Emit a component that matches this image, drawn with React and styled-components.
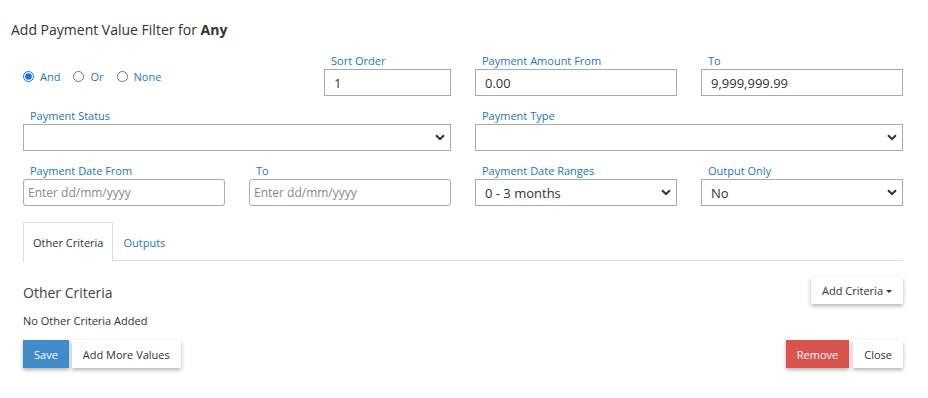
import React from "react";
import styled, { createGlobalStyle } from "styled-components";

const Global = createGlobalStyle`
  html, body { margin: 0; padding: 0; background: #fff; }
  body { font-family: "Open Sans", "Noto Sans", Arial, sans-serif; color: #333; }
  * { box-sizing: border-box; }
`;

const Page = styled.div`
  width: 928px;
  padding: 20px 0 24px 11px;
`;

const Title = styled.h1`
  margin: 0;
  font-size: 14px;
  font-weight: 400;
  line-height: 20px;
  color: #333;
  b { font-weight: 700; }
`;

const Form = styled.div`
  margin-left: 12px;
  width: 880px;
  padding-top: 14px;
`;

const Grid = styled.div`
  display: grid;
  grid-template-columns: repeat(4, 202px);
  column-gap: 24px;
  row-gap: 13px;
`;

const Field = styled.div`
  display: flex;
  flex-direction: column;
  grid-column: span ${(p) => p.$span || 1};
  align-self: end;
  ${(p) => (p.$width ? `width: ${p.$width}px; justify-self: end;` : "")}
`;

const Label = styled.label`
  font-size: 11px;
  line-height: 14px;
  color: #2277bb;
  padding-left: 7px;
  margin-bottom: 1px;
`;

const TextInput = styled.input`
  height: 27px;
  width: 100%;
  border: 1px solid #aaa;
  border-radius: ${(p) => (p.$rounded ? "3px" : "0")};
  padding: 0 ${(p) => (p.$rounded ? "4px" : "9px")};
  font-family: inherit;
  font-size: ${(p) => (p.$rounded ? "12px" : "13px")};
  color: #333;
  outline: none;
  &::placeholder { color: #8a8a8a; }
`;

const SelectWrap = styled.div`
  position: relative;
  height: 27px;
`;

const Select = styled.select`
  appearance: none;
  -webkit-appearance: none;
  width: 100%;
  height: 27px;
  border: 1px solid #aaa;
  border-radius: 0;
  background: #fff;
  padding: 0 24px 0 9px;
  font-family: inherit;
  font-size: 13px;
  color: #333;
  outline: none;
`;

const Chevron = styled.svg`
  position: absolute;
  right: 6px;
  top: 10px;
  width: 10px;
  height: 7px;
  pointer-events: none;
`;

const RadioGroup = styled.div`
  display: flex;
  align-items: center;
  height: 27px;
  gap: 13px;
  align-self: end;
  margin-bottom: 6px;
`;

const RadioLabel = styled.label`
  display: flex;
  align-items: center;
  gap: 6px;
  font-size: 11px;
  color: #2277bb;
  input {
    margin: 0;
    width: 11px;
    height: 11px;
    accent-color: #1a73e8;
  }
`;

const Row1Second = styled.div`
  display: flex;
  justify-content: flex-end;
  align-self: end;
`;

const Tabs = styled.div`
  display: flex;
  margin-top: 16px;
  border-bottom: 1px solid #ddd;
  height: 39px;
`;

const Tab = styled.div`
  display: flex;
  align-items: center;
  padding: 0 9px;
  font-size: 11px;
  color: ${(p) => (p.$active ? "#333" : "#2277bb")};
  border: 1px solid ${(p) => (p.$active ? "#ddd" : "transparent")};
  border-bottom: none;
  background: ${(p) => (p.$active ? "#fff" : "transparent")};
  margin-bottom: ${(p) => (p.$active ? "-1px" : "0")};
  height: ${(p) => (p.$active ? "40px" : "39px")};
`;

const SectionHead = styled.div`
  display: flex;
  justify-content: space-between;
  align-items: center;
  margin-top: 16px;
`;

const SectionTitle = styled.h2`
  margin: 0;
  font-size: 14px;
  font-weight: 400;
  color: #444;
  padding-top: 3px;
`;

const Note = styled.p`
  margin: 9px 0 0;
  font-size: 11px;
  line-height: 16px;
  color: #333;
`;

const Actions = styled.div`
  display: flex;
  justify-content: space-between;
  margin-top: 11px;
`;

const Group = styled.div`
  display: flex;
  gap: ${(p) => p.$gap || 3}px;
`;

const Button = styled.button`
  height: ${(p) => p.$h || 28}px;
  padding: 0 ${(p) => p.$px || 11}px;
  border: none;
  font-family: inherit;
  font-size: 11px;
  cursor: pointer;
  box-shadow: 0 2px 4px rgba(0, 0, 0, 0.3);
  background: ${(p) =>
    p.$variant === "primary" ? "#428bca" : p.$variant === "danger" ? "#d9534f" : "#fff"};
  color: ${(p) => (p.$variant ? "#fff" : "#333")};
  display: inline-flex;
  align-items: center;
  gap: 3px;
`;

const Caret = styled.span`
  display: inline-block;
  width: 0;
  height: 0;
  border-left: 3px solid transparent;
  border-right: 3px solid transparent;
  border-top: 3px solid #333;
  margin-top: 1px;
`;

const ChevronIcon = () => (
  <Chevron viewBox="0 0 10 7">
    <path d="M1 1.2 L5 5 L9 1.2" fill="none" stroke="#333" strokeWidth="2" />
  </Chevron>
);

const SelectField = ({ label, value, options, span }) => (
  <Field $span={span}>
    <Label>{label}</Label>
    <SelectWrap>
      <Select defaultValue={value}>
        {options.map((o) => (
          <option key={o}>{o}</option>
        ))}
      </Select>
      <ChevronIcon />
    </SelectWrap>
  </Field>
);

export default function App() {
  return (
    <>
      <Global />
      <Page>
        <Title>
          Add Payment Value Filter for <b>Any</b>
        </Title>
        <Form>
          <Grid>
            <RadioGroup>
              <RadioLabel>
                <input type="radio" name="op" defaultChecked /> And
              </RadioLabel>
              <RadioLabel>
                <input type="radio" name="op" /> Or
              </RadioLabel>
              <RadioLabel>
                <input type="radio" name="op" /> None
              </RadioLabel>
            </RadioGroup>
            <Row1Second>
              <Field $width={127}>
                <Label>Sort Order</Label>
                <TextInput defaultValue="1" />
              </Field>
            </Row1Second>
            <Field>
              <Label>Payment Amount From</Label>
              <TextInput defaultValue="0.00" />
            </Field>
            <Field>
              <Label>To</Label>
              <TextInput defaultValue="9,999,999.99" />
            </Field>

            <SelectField label="Payment Status" value="" options={[""]} span={2} />
            <SelectField label="Payment Type" value="" options={[""]} span={2} />

            <Field>
              <Label>Payment Date From</Label>
              <TextInput $rounded placeholder="Enter dd/mm/yyyy" />
            </Field>
            <Field>
              <Label>To</Label>
              <TextInput $rounded placeholder="Enter dd/mm/yyyy" />
            </Field>
            <SelectField
              label="Payment Date Ranges"
              value="0 - 3 months"
              options={["0 - 3 months", "3 - 6 months", "6 - 12 months"]}
            />
            <SelectField label="Output Only" value="No" options={["No", "Yes"]} />
          </Grid>

          <Tabs>
            <Tab $active>Other Criteria</Tab>
            <Tab>Outputs</Tab>
          </Tabs>

          <SectionHead>
            <SectionTitle>Other Criteria</SectionTitle>
            <Button $h={27} $px={11}>
              Add Criteria <Caret />
            </Button>
          </SectionHead>
          <Note>No Other Criteria Added</Note>

          <Actions>
            <Group>
              <Button $variant="primary">Save</Button>
              <Button>Add More Values</Button>
            </Group>
            <Group $gap={4}>
              <Button $variant="danger">Remove</Button>
              <Button>Close</Button>
            </Group>
          </Actions>
        </Form>
      </Page>
    </>
  );
}
